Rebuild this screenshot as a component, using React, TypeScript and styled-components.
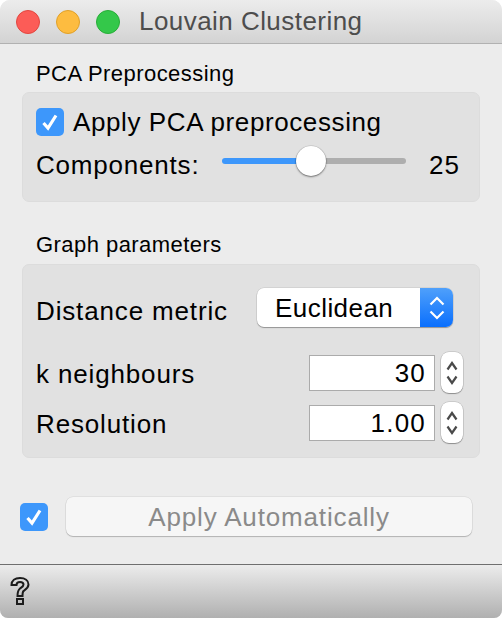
import React from "react";
import styled, { createGlobalStyle } from "styled-components";

const Global = createGlobalStyle`
  html, body {
    margin: 0;
    padding: 0;
    background: #fff;
  }
  * {
    box-sizing: border-box;
  }
`;

const Win = styled.div`
  width: 502px;
  height: 618px;
  display: flex;
  flex-direction: column;
  background: #ececec;
  border-radius: 10px 10px 8px 8px;
  overflow: hidden;
  font-family: "Liberation Sans", Arial, sans-serif;
  color: #000;
  letter-spacing: 0.6px;
`;

const TitleBar = styled.div`
  height: 44px;
  flex: none;
  display: flex;
  align-items: center;
  padding-left: 16px;
  background: linear-gradient(#ececec, #d3d3d3);
  border-bottom: 1px solid #b1b1b1;
`;

const Light = styled.span<{ $bg: string; $edge: string }>`
  width: 24px;
  height: 24px;
  margin-right: 16px;
  border-radius: 50%;
  background: ${(p) => p.$bg};
  border: 1px solid ${(p) => p.$edge};
`;

const Title = styled.div`
  margin-left: 3px;
  font-size: 26px;
  letter-spacing: 0.45px;
  color: #4d4d4d;
`;

const Body = styled.div`
  flex: 1;
  display: flex;
  flex-direction: column;
  padding: 17px 22px 0;
`;

const GroupLabel = styled.div<{ $h: number }>`
  height: ${(p) => p.$h}px;
  padding-left: 14px;
  font-size: 22px;
  line-height: 25px;
  letter-spacing: 0.45px;
`;

const Group = styled.div<{ $h: number; $mb: number }>`
  height: ${(p) => p.$h}px;
  margin-bottom: ${(p) => p.$mb}px;
  background: #e1e1e1;
  border: 1px solid #dcdcdc;
  border-radius: 7px;
`;

const PcaBox = styled.div`
  display: flex;
  flex-direction: column;
  padding: 15px 19px 0 13px;
`;

const CheckRow = styled.div`
  display: flex;
  align-items: center;
  gap: 9px;
  height: 28px;
  font-size: 26px;
`;

const CheckBox = styled.span`
  width: 28px;
  height: 28px;
  flex: none;
  display: flex;
  align-items: center;
  justify-content: center;
  background: #3d97fb;
  border-radius: 5px;
`;

const SliderRow = styled.div`
  display: flex;
  align-items: center;
  height: 36px;
  margin-top: 11px;
  font-size: 26px;
`;

const SliderLabel = styled.div`
  width: 186px;
  letter-spacing: 0.8px;
`;

const Track = styled.div`
  position: relative;
  width: 184px;
  height: 6px;
  margin-top: -8px;
  border-radius: 3px;
  background: linear-gradient(to right, #3d97fb 89px, #aeaeae 89px);
`;

const Thumb = styled.span`
  position: absolute;
  left: 74px;
  top: -12px;
  width: 30px;
  height: 30px;
  border-radius: 50%;
  background: #fff;
  box-shadow: 0 1px 2px rgba(0, 0, 0, 0.45), 0 0 0 0.5px rgba(0, 0, 0, 0.15);
`;

const SliderValue = styled.div`
  flex: 1;
  text-align: right;
  letter-spacing: 1px;
`;

const GraphBox = styled.div`
  display: flex;
  flex-direction: column;
  padding: 23px 16px 0 13px;
`;

const FormRow = styled.div<{ $h: number; $mb: number }>`
  display: flex;
  align-items: center;
  justify-content: space-between;
  height: ${(p) => p.$h}px;
  margin-bottom: ${(p) => p.$mb}px;
  font-size: 26px;
`;

const FormLabel = styled.div<{ $drop: number }>`
  padding-top: ${(p) => p.$drop}px;
  letter-spacing: 0.85px;
`;

const Combo = styled.div`
  width: 196px;
  height: 39px;
  margin-right: 10px;
  display: flex;
  align-items: stretch;
  border-radius: 7px;
  background: #fff;
  box-shadow: 0 1px 1px rgba(0, 0, 0, 0.3), 0 0 0 0.5px rgba(0, 0, 0, 0.12);
  overflow: hidden;
`;

const ComboText = styled.div`
  flex: 1;
  padding-left: 18px;
  line-height: 40px;
  letter-spacing: 0.45px;
`;

const ComboArrows = styled.div`
  width: 33px;
  display: flex;
  align-items: center;
  justify-content: center;
  background: linear-gradient(#4fa0fb, #0a6ffd);
`;

const SpinWrap = styled.div`
  display: flex;
  align-items: center;
  gap: 6px;
`;

const SpinInput = styled.div`
  width: 126px;
  height: 36px;
  padding-right: 8px;
  text-align: right;
  line-height: 34px;
  letter-spacing: 1.2px;
  background: #fff;
  border: 1px solid #ababab;
`;

const Stepper = styled.div`
  width: 22px;
  height: 41px;
  display: flex;
  align-items: center;
  justify-content: center;
  background: #fff;
  border-radius: 8px;
  box-shadow: 0 1px 1px rgba(0, 0, 0, 0.3), 0 0 0 0.5px rgba(0, 0, 0, 0.2);
`;

const ApplyRow = styled.div`
  display: flex;
  align-items: center;
  gap: 18px;
  margin: 0 8px 0 -2px;
`;

const ApplyButton = styled.div`
  flex: 1;
  height: 39px;
  text-align: center;
  font-size: 26px;
  line-height: 40px;
  letter-spacing: 0.85px;
  color: #8a8a8a;
  background: #f6f6f6;
  border-radius: 7px;
  box-shadow: 0 1px 1px rgba(0, 0, 0, 0.2), 0 0 0 0.5px rgba(0, 0, 0, 0.1);
`;

const StatusBar = styled.div`
  height: 54px;
  flex: none;
  display: flex;
  align-items: center;
  padding: 0 0 2px 10px;
  background: linear-gradient(#ececec, #b0b0b0);
  border-top: 1px solid #6f6f6f;
`;

const Check = () => (
  <svg width="20" height="20" viewBox="0 0 20 20" fill="none">
    <path d="M3.5 11 L8 16 L16 3.5" stroke="#fff" strokeWidth="3.2" />
  </svg>
);

const Chevrons = ({ color, w }: { color: string; w: number }) => (
  <svg width={w} height="24" viewBox={`0 0 ${w} 24`} fill="none">
    <path
      d={`M1.5 8.500 L${w / 2} 2 L${w - 1.5} 8.500 M1.5 15.500 L${w / 2} 22 L${w - 1.5} 15.500`}
      stroke={color}
      strokeWidth="2.2"
    />
  </svg>
);

const Help = () => (
  <svg width="20" height="28" viewBox="0 0 20 28" fill="none" stroke="#1c1c1c" strokeWidth="2">
    <path d="M1.5 8 C1.5 3.5 5 1 10 1 C15 1 18.500 3.500 18.500 7.500 C18.500 11 15.500 12.500 13.500 14 C12.500 15 12.500 16 12.500 19 L7.500 19 C7.500 15.500 7.500 13.500 10 11.500 C12 10 13.500 9.500 13.500 7.500 C13.500 6 12 5 10 5 C8 5 6.500 6.200 6.500 8 Z" />
    <rect x="7" y="22" width="6" height="5" />
  </svg>
);

export default function App() {
  return (
    <Win>
      <Global />
      <TitleBar>
        <Light $bg="#fc5c57" $edge="#e2463f" />
        <Light $bg="#fdbc40" $edge="#e0a028" />
        <Light $bg="#34c84a" $edge="#28ad38" />
        <Title>Louvain Clustering</Title>
      </TitleBar>
      <Body>
        <GroupLabel $h={31}>PCA Preprocessing</GroupLabel>
        <Group $h={110} $mb={30}>
          <PcaBox>
            <CheckRow>
              <CheckBox>
                <Check />
              </CheckBox>
              Apply PCA preprocessing
            </CheckRow>
            <SliderRow>
              <SliderLabel>Components:</SliderLabel>
              <Track>
                <Thumb />
              </Track>
              <SliderValue>25</SliderValue>
            </SliderRow>
          </PcaBox>
        </Group>
        <GroupLabel $h={32}>Graph parameters</GroupLabel>
        <Group $h={194} $mb={39}>
          <GraphBox>
            <FormRow $h={39} $mb={25}>
              <FormLabel $drop={8}>Distance metric</FormLabel>
              <Combo>
                <ComboText>Euclidean</ComboText>
                <ComboArrows>
                  <Chevrons color="#fff" w={16} />
                </ComboArrows>
              </Combo>
            </FormRow>
            <FormRow $h={41} $mb={9}>
              <FormLabel $drop={4}>k neighbours</FormLabel>
              <SpinWrap>
                <SpinInput>30</SpinInput>
                <Stepper>
                  <Chevrons color="#4a4a4a" w={12} />
                </Stepper>
              </SpinWrap>
            </FormRow>
            <FormRow $h={41} $mb={0}>
              <FormLabel $drop={4}>Resolution</FormLabel>
              <SpinWrap>
                <SpinInput>1.00</SpinInput>
                <Stepper>
                  <Chevrons color="#4a4a4a" w={12} />
                </Stepper>
              </SpinWrap>
            </FormRow>
          </GraphBox>
        </Group>
        <ApplyRow>
          <CheckBox>
            <Check />
          </CheckBox>
          <ApplyButton>Apply Automatically</ApplyButton>
        </ApplyRow>
      </Body>
      <StatusBar>
        <Help />
      </StatusBar>
    </Win>
  );
}
